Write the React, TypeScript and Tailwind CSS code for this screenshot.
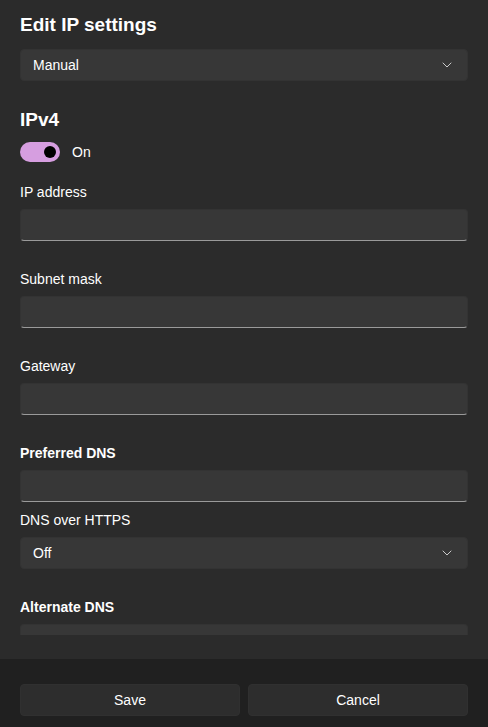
import { ChevronDown } from "lucide-react";

const font = { fontFamily: '"Liberation Sans", Arial, sans-serif' };

function Dropdown({ value }: { value: string }) {
  return (
    <div className="flex h-8 items-center justify-between rounded-[4px] border border-[#333333] bg-[#373737] pl-3 pr-3 text-[14px] leading-5 text-[#ffffff]">
      <span>{value}</span>
      <ChevronDown size={16} strokeWidth={1.4} className="text-[#d6d6d6]" />
    </div>
  );
}

function TextBox() {
  return <div className="h-8 rounded-[4px] border border-[#333333] border-b-[#9a9a9a] bg-[#373737]" />;
}

function Field({ label, bold, gap = "mt-[28px]" }: { label: string; bold?: boolean; gap?: string }) {
  return (
    <div className={gap}>
      <div className={`h-5 text-[14px] leading-5 text-[#ffffff] ${bold ? "font-bold" : ""}`}>{label}</div>
      <div className="mt-[7px]">
        <TextBox />
      </div>
    </div>
  );
}

export default function App() {
  return (
    <div style={font} className="flex h-[727px] w-[488px] flex-col overflow-hidden bg-[#2b2b2b] text-white">
      <div className="px-5 pt-[11px]">
        <div className="h-[624px] overflow-hidden">
          <h1 className="h-7 text-[19px] font-bold leading-7">Edit IP settings</h1>
          <div className="mt-[10px]">
            <Dropdown value="Manual" />
          </div>

          <h2 className="mt-[25px] h-7 text-[19px] font-bold leading-7">IPv4</h2>
          <div className="mt-2 flex h-5 items-center gap-3">
            <div className="flex h-5 w-10 items-center justify-end rounded-full bg-[#d69ee0] pr-1">
              <div className="h-3 w-3 rounded-full bg-black" />
            </div>
            <span className="text-[14px] leading-5">On</span>
          </div>

          <Field label="IP address" gap="mt-5" />
          <Field label="Subnet mask" />
          <Field label="Gateway" />
          <Field label="Preferred DNS" bold />

          <div className="mt-2">
            <div className="h-5 text-[14px] leading-5">DNS over HTTPS</div>
            <div className="mt-[7px]">
              <Dropdown value="Off" />
            </div>
          </div>

          <Field label="Alternate DNS" bold />
        </div>
      </div>

      <div className="mt-6 flex flex-1 gap-2 bg-[#202020] px-5 pt-[25px]">
        <button className="h-8 flex-1 rounded-[4px] border border-[#303030] bg-[#2d2d2d] text-[14px] leading-5 text-white">
          Save
        </button>
        <button className="h-8 flex-1 rounded-[4px] border border-[#303030] bg-[#2d2d2d] text-[14px] leading-5 text-white">
          Cancel
        </button>
      </div>
    </div>
  );
}
